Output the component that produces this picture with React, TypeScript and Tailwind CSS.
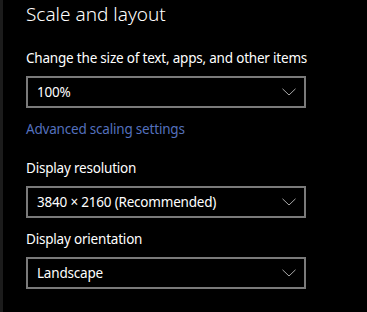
function Chevron() {
  return (
    <svg width="14" height="8" viewBox="0 0 14 8" fill="none" className="shrink-0">
      <path d="M0.5 0.8 L7 7 L13.5 0.8" stroke="#a8a8a8" strokeWidth="1" />
    </svg>
  )
}

function Select({ value }: { value: string }) {
  return (
    <div className="flex h-8 w-[280px] items-center justify-between border-2 border-[#7a7a7a] pl-[9px] pr-[8px] text-[13.5px] tracking-[-0.2px] text-white">
      <span>{value}</span>
      <Chevron />
    </div>
  )
}

function App() {
  return (
    <div
      className="h-[312px] w-[367px] border-l-[3px] border-[#1c1c1c] bg-black pl-[23px] text-white"
      style={{ fontFamily: '"Noto Sans", "Open Sans", sans-serif' }}
    >
      <h1 className="text-[19px] leading-[28px] font-light">Scale and layout</h1>
      <p className="mt-5 text-[13.5px] leading-5 tracking-[-0.2px]">Change the size of text, apps, and other items</p>
      <div className="mt-2">
        <Select value="100%" />
      </div>
      <a className="mt-[11px] block text-[13.5px] leading-5 tracking-[-0.2px] text-[#5470bd]" href="#">
        Advanced scaling settings
      </a>
      <p className="mt-[19px] text-[13.5px] leading-5 tracking-[-0.2px]">Display resolution</p>
      <div className="mt-2">
        <Select value="3840 × 2160 (Recommended)" />
      </div>
      <p className="mt-[11px] text-[13.5px] leading-5 tracking-[-0.2px]">Display orientation</p>
      <div className="mt-2">
        <Select value="Landscape" />
      </div>
    </div>
  )
}

export default App
